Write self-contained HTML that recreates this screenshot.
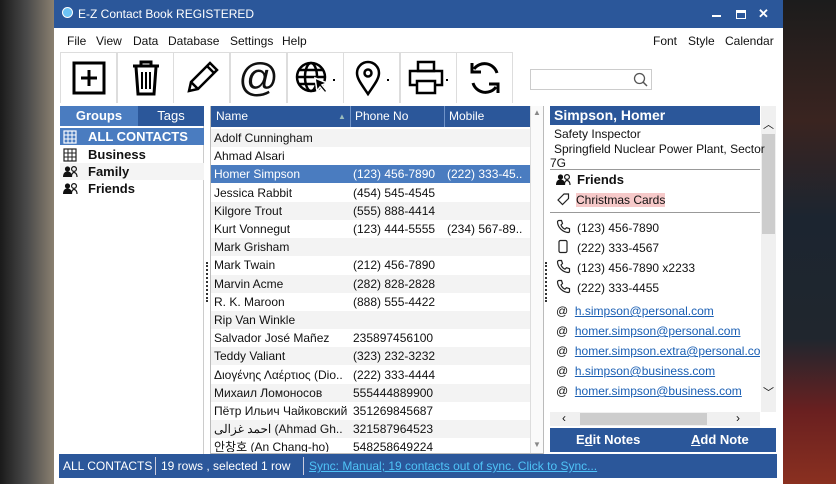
<!DOCTYPE html>
<html><head><meta charset="utf-8"><style>
*{box-sizing:border-box;margin:0;padding:0}
body{width:836px;height:484px;overflow:hidden;position:relative;font-family:"Liberation Sans","Noto Sans CJK KR",sans-serif;font-size:12px;color:#111;background:#2a2a2a}
.bgl{position:absolute;left:0;top:0;width:54px;height:484px;background:linear-gradient(90deg,#1a1a1a 0,#4a4a4a 50%,#8a8070 100%)}
.bgr{position:absolute;left:783px;top:0;width:53px;height:484px;background:linear-gradient(180deg,#1c1c1c 0,#3a2420 25%,#1c2530 45%,#20262e 70%,#6a2020 85%,#8a3020 100%)}
.win{position:absolute;left:54px;top:0;width:729px;height:484px;background:#fff}
.title{position:absolute;left:0;top:0;width:729px;height:28px;background:#2b579a;color:#fff;font-size:12px}
.abs{position:absolute}
.menu span{position:absolute;top:34px;font-size:12px}
.tb{position:absolute;top:52px;width:57px;height:51px;border:1px solid #ddd;border-bottom:none;display:flex;align-items:center;justify-content:center}
.blue{background:#2b579a;color:#fff}
.row{position:absolute;left:211px;width:319px;height:18px;line-height:18px;font-size:12px}
.row span{position:absolute}
.g{position:absolute;left:60px;width:144px;height:17px;line-height:17px;font-weight:bold;font-size:13px}
.g svg{position:absolute;left:3px;top:2px}
.d{position:absolute;left:556px;font-size:12px;line-height:16px}
.d svg{vertical-align:-2px;margin-right:6px}
a{color:#1a5fb4;text-decoration:underline}
</style></head><body>
<svg width="0" height="0" style="position:absolute"><defs>
<g id="ppl"><circle cx="4.5" cy="4" r="2.6" fill="currentColor"/><path d="M0 12c0-4 2-5.5 4.5-5.5S9 8 9 12z" fill="currentColor"/><circle cx="11" cy="4" r="2.4" fill="none" stroke="currentColor" stroke-width="1.2"/><path d="M8.5 12c0-3 1-4.5 2.5-4.5s3 1.5 3 4.5" fill="none" stroke="currentColor" stroke-width="1.2"/></g>
<g id="ph"><path d="M3 1.5l2.5 0 1 3-1.5 1.5c.8 2 2.2 3.4 4 4.2l1.5-1.5 3 1v2.5c0 .8-.6 1.3-1.4 1.3C6.5 13 1.7 8.3 1.5 2.9 1.5 2.1 2.2 1.5 3 1.5z" fill="none" stroke="#222" stroke-width="1.2"/></g>
<g id="grid"><rect x="1" y="1" width="12" height="12" fill="none" stroke="currentColor" stroke-width="1.2"/><path d="M1 5h12M1 9h12M5 1v12M9 1v12" stroke="currentColor" stroke-width="1"/></g>
</defs></svg>
<div class="bgl"></div><div class="bgr"></div>
<div class="win">
<div class="title">
 <div class="abs" style="left:8px;top:7px;width:11px;height:11px;border-radius:50%;background:#6cc3f5;border:1px solid #fff"></div>
 <div class="abs" style="left:24px;top:7px">E-Z Contact Book REGISTERED</div>
 <div class="abs" style="left:658px;top:15px;width:9px;height:2px;background:#fff"></div>
 <div class="abs" style="left:682px;top:10px;width:10px;height:9px;border:1.5px solid #fff;border-top-width:3px"></div>
 <div class="abs" style="left:704px;top:6px;font-size:13px;font-weight:bold">✕</div>
</div>
</div>
<div class="menu">
<span style="left:67px">File</span><span style="left:96px">View</span><span style="left:133px">Data</span><span style="left:168px">Database</span><span style="left:230px">Settings</span><span style="left:282px">Help</span>
<span style="left:653px">Font</span><span style="left:688px">Style</span><span style="left:725px">Calendar</span>
</div>
<div class="tb" style="left:60px"><svg width="36" height="36" viewBox="0 0 36 36"><rect x="3" y="3" width="30" height="30" fill="none" stroke="#000" stroke-width="3"/><path d="M18 10v16M10 18h16" stroke="#000" stroke-width="3"/></svg></div>
<div class="tb" style="left:117px"><svg width="36" height="38" viewBox="0 0 36 38"><path d="M5 7h26M13 7V3h10v4M8 8l2 27h16l2-27" fill="none" stroke="#000" stroke-width="3"/><path d="M14 13v17M18 13v17M22 13v17" stroke="#000" stroke-width="2"/></svg></div>
<div class="tb" style="left:173px"><svg width="38" height="38" viewBox="0 0 38 38"><path d="M6 32l2-9L27 4l7 7L15 30z M8 23l7 7M24 7l7 7" fill="none" stroke="#000" stroke-width="2.5"/></svg></div>
<div class="tb" style="left:230px"><span style="font-size:40px;line-height:1">@</span></div>
<div class="tb" style="left:287px"><svg width="44" height="38" viewBox="0 0 44 38"><circle cx="17" cy="18" r="14" fill="none" stroke="#000" stroke-width="2.5"/><ellipse cx="17" cy="18" rx="6" ry="14" fill="none" stroke="#000" stroke-width="2.5"/><path d="M3 18h28M5 11h24M5 25h18" stroke="#000" stroke-width="2.5"/><path d="M21 19l12 5-5 2 5 6-2 2-5-6-3 4z" fill="#000" stroke="#fff" stroke-width="1.5"/><rect x="39" y="20" width="2" height="2"/></svg></div>
<div class="tb" style="left:343px"><svg width="40" height="38" viewBox="0 0 40 38"><path d="M16 35C10 26 5 20 5 14a11 11 0 0122 0c0 6-5 12-11 21z" fill="none" stroke="#000" stroke-width="2.5"/><circle cx="16" cy="14" r="3.5" fill="none" stroke="#000" stroke-width="2.5"/><rect x="35" y="20" width="2" height="2"/></svg></div>
<div class="tb" style="left:400px"><svg width="44" height="38" viewBox="0 0 44 38"><rect x="11" y="3" width="16" height="9" fill="none" stroke="#000" stroke-width="2.5"/><rect x="3" y="12" width="32" height="14" fill="none" stroke="#000" stroke-width="2.5"/><rect x="10" y="22" width="18" height="12" fill="#fff" stroke="#000" stroke-width="2.5"/><rect x="39" y="20" width="2" height="2"/></svg></div>
<div class="tb" style="left:456px"><svg width="38" height="38" viewBox="0 0 38 38"><path d="M31 14A13 13 0 008 10M7 24a13 13 0 0023 4" fill="none" stroke="#000" stroke-width="3"/><path d="M6 4v9h9M32 34v-9h-9" fill="none" stroke="#000" stroke-width="3"/></svg></div>
<div class="abs" style="left:530px;top:69px;width:122px;height:21px;border:1px solid #ccc"><svg class="abs" style="left:102px;top:2px" width="16" height="16"><circle cx="6.5" cy="6.5" r="5" fill="none" stroke="#555" stroke-width="1.3"/><path d="M10 10l4 4" stroke="#555" stroke-width="1.5"/></svg></div>
<div class="abs" style="left:60px;top:106px;width:78px;height:20px;background:#4a7cc0;color:#fff;font-weight:bold;text-align:center;line-height:20px;font-size:13px">Groups</div>
<div class="abs blue" style="left:138px;top:106px;width:66px;height:20px;text-align:center;line-height:20px;font-size:13px">Tags</div>
<div class="abs" style="left:60px;top:126px;width:144px;height:328px;border-right:1px solid #ccc"></div>
<div class="g" style="top:128px;background:#4a7cc0;color:#fff"><svg width="14" height="14" style="color:#fff"><use href="#grid"/></svg><span style="position:absolute;left:28px">ALL CONTACTS</span></div>
<div class="g" style="top:146px"><svg width="14" height="14" style="color:#222"><use href="#grid"/></svg><span style="position:absolute;left:28px">Business</span></div>
<div class="g" style="top:163px;background:#f4f4f4"><svg width="15" height="13" style="color:#111"><use href="#ppl"/></svg><span style="position:absolute;left:28px">Family</span></div>
<div class="g" style="top:180px"><svg width="15" height="13" style="color:#111"><use href="#ppl"/></svg><span style="position:absolute;left:28px">Friends</span></div>
<div class="abs" style="left:206px;top:262px;width:2px;height:40px;border-left:2px dotted #333"></div>
<div class="abs" style="left:545px;top:262px;width:2px;height:40px;border-left:2px dotted #333"></div>
<div class="abs" style="left:210px;top:106px;width:334px;height:348px;border:1px solid #bbb"></div>
<div class="abs blue" style="left:211px;top:106px;width:319px;height:21px;line-height:21px">
<span class="abs" style="left:5px">Name</span><span class="abs" style="left:127px;font-size:8px;color:#9bb">▲</span>
<span class="abs" style="left:139px;top:0;height:21px;border-left:1px solid #6f93c8;padding-left:4px">Phone No</span>
<span class="abs" style="left:233px;top:0;height:21px;border-left:1px solid #6f93c8;padding-left:4px">Mobile</span></div>
<div class="abs" style="left:530px;top:106px;width:13px;height:347px;background:#fafafa;border-left:1px solid #ddd"><span class="abs" style="left:2px;top:2px;font-size:8px;color:#888">▲</span><span class="abs" style="left:2px;top:334px;font-size:8px;color:#888">▼</span></div>
<div id="rows"></div>
<div class="abs blue" style="left:550px;top:106px;width:210px;height:19px;font-weight:bold;font-size:14px;line-height:19px;padding-left:4px">Simpson, Homer</div>
<div class="abs" style="left:761px;top:106px;width:15px;height:306px;background:#f0f0f0"><div class="abs" style="left:1px;top:28px;width:13px;height:100px;background:#cdcdcd"></div><span class="abs" style="left:2px;top:10px;font-size:11px">︿</span><span class="abs" style="left:2px;top:278px;font-size:11px">﹀</span></div>
<div class="d" style="top:126px;left:554px">Safety Inspector</div>
<div class="d" style="top:141px;left:554px">Springfield Nuclear Power Plant, Sector</div>
<div class="d" style="top:155px;left:550px">7G</div>
<div class="abs" style="left:550px;top:169px;width:210px;border-top:1px solid #999"></div>
<div class="d" style="top:172px;font-weight:bold;font-size:13px"><svg width="15" height="13" style="color:#111"><use href="#ppl"/></svg>Friends</div>
<div class="d" style="top:192px"><svg width="14" height="14"><path d="M2 8L8 2h4.5v4.5L6.5 12.5z" fill="none" stroke="#222" stroke-width="1.2"/></svg><span style="background:#f6c9c9">Christmas Cards</span></div>
<div class="abs" style="left:550px;top:212px;width:210px;border-top:1px solid #999"></div>
<div class="d" style="top:219px"><svg width="15" height="15"><use href="#ph"/></svg>(123) 456-7890</div>
<div class="d" style="top:239px"><svg width="15" height="15"><rect x="3" y="1.5" width="8" height="12" rx="1.5" fill="none" stroke="#222" stroke-width="1.2"/></svg>(222) 333-4567</div>
<div class="d" style="top:259px"><svg width="15" height="15"><use href="#ph"/></svg>(123) 456-7890 x2233</div>
<div class="d" style="top:279px"><svg width="15" height="15"><use href="#ph"/></svg>(222) 333-4455</div>
<div class="d" style="top:303px">@&nbsp; <a>h.simpson@personal.com</a></div>
<div class="d" style="top:323px">@&nbsp; <a>homer.simpson@personal.com</a></div>
<div class="d" style="top:343px;width:204px;overflow:hidden;white-space:nowrap">@&nbsp; <a>homer.simpson.extra@personal.com</a></div>
<div class="d" style="top:363px">@&nbsp; <a>h.simpson@business.com</a></div>
<div class="d" style="top:383px">@&nbsp; <a>homer.simpson@business.com</a></div>
<div class="abs" style="left:550px;top:412px;width:210px;height:14px;background:#f0f0f0"><div class="abs" style="left:30px;top:1px;width:127px;height:12px;background:#cdcdcd"></div><span class="abs" style="left:12px;top:-1px">‹</span><span class="abs" style="left:186px;top:-1px">›</span></div>
<div class="abs blue" style="left:550px;top:428px;width:226px;height:24px;font-weight:bold;font-size:13px;line-height:24px"><span class="abs" style="left:26px">E<u>d</u>it Notes</span><span class="abs" style="left:141px"><u>A</u>dd Note</span></div>
<div class="abs blue" style="left:59px;top:454px;width:718px;height:24px;line-height:24px;font-size:12px">
<span class="abs" style="left:4px">ALL CONTACTS</span>
<span class="abs" style="left:96px;top:3px;height:18px;border-left:1px solid #ccd;"></span>
<span class="abs" style="left:102px">19 rows , selected 1 row</span>
<span class="abs" style="left:244px;top:3px;height:18px;border-left:1px solid #ccd;"></span>
<span class="abs" style="left:250px;color:#4fc3f7;text-decoration:underline">Sync: Manual; 19 contacts out of sync. Click to Sync...</span></div>
<script>
var d=[["Adolf Cunningham","",""],["Ahmad Alsari","",""],["Homer Simpson","(123) 456-7890","(222) 333-45.."],["Jessica Rabbit","(454) 545-4545",""],["Kilgore Trout","(555) 888-4414",""],["Kurt Vonnegut","(123) 444-5555","(234) 567-89.."],["Mark Grisham","",""],["Mark Twain","(212) 456-7890",""],["Marvin Acme","(282) 828-2828",""],["R. K. Maroon","(888) 555-4422",""],["Rip Van Winkle","",""],["Salvador José Mañez","235897456100",""],["Teddy Valiant","(323) 232-3232",""],["Διογένης Λαέρτιος (Dio..","(222) 333-4444",""],["Михаил Ломоносов","555444889900",""],["Пётр Ильич Чайковский","351269845687",""],["احمد غزالی (Ahmad Gh..","321587964523",""],["안창호 (An Chang-ho)","548258649224",""]];
var h="";d.forEach(function(r,i){var t=129+i*18.2;var bg=i==2?"background:#4a7cc0;color:#fff;":(i%2==0?"background:#f3f3f3;":"");var hh=i==17?"height:14px;overflow:hidden;":"";h+='<div class="row" style="top:'+t+'px;'+bg+hh+'"><span style="left:3px">'+r[0]+'</span><span style="left:142px">'+r[1]+'</span><span style="left:236px">'+r[2]+'</span></div>';});
document.getElementById("rows").innerHTML=h;
</script>
</body></html>
